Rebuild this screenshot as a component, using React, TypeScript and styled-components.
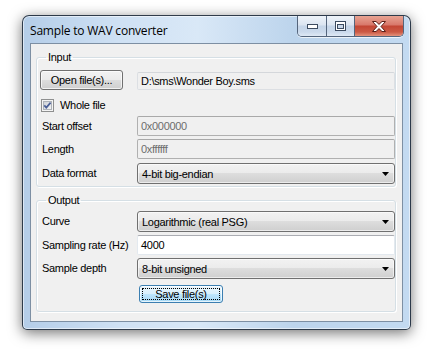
import React from "react";
import styled, { createGlobalStyle } from "styled-components";

const GlobalStyle = createGlobalStyle`
  html, body {
    margin: 0;
    padding: 0;
    background: #ffffff;
  }
  body {
    width: 433px;
    height: 353px;
    overflow: hidden;
    font-family: "Liberation Sans", Arial, sans-serif;
    font-size: 11px;
    letter-spacing: -0.3px;
    color: #000;
  }
`;

const Window = styled.div`
  box-sizing: border-box;
  width: 389px;
  height: 315px;
  margin: 15px 0 0 22px;
  padding: 0 7px 7px;
  display: flex;
  flex-direction: column;
  border: 1px solid rgba(20, 30, 45, 0.85);
  border-radius: 7px 7px 5px 5px;
  background: linear-gradient(
    to right,
    #b4cde8 0%,
    #cfe1f4 25%,
    #d9e8f7 45%,
    #bcd4ec 70%,
    #c3daf1 100%
  );
  box-shadow: inset 0 0 0 1px rgba(255, 255, 255, 0.55),
    0 3px 14px rgba(0, 0, 0, 0.55);
`;

const TitleBar = styled.div`
  height: 27px;
  display: flex;
  align-items: flex-start;
  justify-content: space-between;
`;

const Title = styled.div`
  padding-top: 6px;
  font-family: "Open Sans", "Noto Sans", sans-serif;
  font-size: 12px;
  letter-spacing: -0.2px;
  color: #000;
`;

const CaptionButtons = styled.div`
  display: flex;
  height: 20px;
  margin-right: -1px;
  border: 1px solid #54657c;
  border-top: none;
  border-radius: 0 0 5px 5px;
  overflow: hidden;
  box-shadow: 0 1px 0 rgba(255, 255, 255, 0.7);
`;

const CaptionButton = styled.div<{ $w: number; $close?: boolean }>`
  width: ${({ $w }) => $w}px;
  display: flex;
  align-items: center;
  justify-content: center;
  background: ${({ $close }) =>
    $close
      ? "linear-gradient(#e8a493 0%, #d8786a 45%, #c34634 50%, #cc5a45 80%, #e3937d 100%)"
      : "linear-gradient(#eef3f9 0%, #dbe5f1 45%, #c5d5e8 50%, #cbdaec 80%, #dfe9f5 100%)"};
  & + & {
    border-left: 1px solid #54657c;
  }
`;

const Client = styled.div`
  flex: 1;
  background: #f0f0f0;
  border: 1px solid #7d8fa3;
  display: flex;
  flex-direction: column;
`;

const Group = styled.fieldset<{ $top: number; $pt: number; $bottom: number }>`
  margin: ${({ $top }) => $top}px 6px 0 5px;
  padding: ${({ $pt }) => $pt}px 0 ${({ $bottom }) => $bottom}px 4px;
  border: 1px solid #d5dfe5;
  border-radius: 3px;
  box-shadow: inset 1px 1px 0 #ffffff, 1px 1px 0 #ffffff;
  min-width: 0;
`;

const Legend = styled.legend`
  margin-left: 5px;
  padding: 0 2px;
  line-height: 13px;
  font-size: 11px;
`;

const Row = styled.div<{ $h: number }>`
  height: ${({ $h }) => $h}px;
  display: grid;
  grid-template-columns: 96px 1fr;
  align-items: start;
`;

const Label = styled.div`
  padding: 4px 0 0 1px;
  line-height: 13px;
  white-space: nowrap;
`;

const PushButton = styled.div<{ $w: number; $h: number; $hot?: boolean }>`
  box-sizing: border-box;
  width: ${({ $w }) => $w}px;
  height: ${({ $h }) => $h}px;
  padding: 2px;
  display: flex;
  border: 1px solid ${({ $hot }) => ($hot ? "#3c7fb1" : "#707070")};
  border-radius: 3px;
  background: ${({ $hot }) =>
    $hot
      ? "linear-gradient(#eaf6fd 0%, #d9f0fc 49%, #bee6fd 50%, #a7d9f5 100%)"
      : "linear-gradient(#f2f2f2 0%, #ebebeb 49%, #dddddd 50%, #cfcfcf 100%)"};
  box-shadow: inset 0 0 0 1px rgba(255, 255, 255, 0.7);
`;

const FocusText = styled.span<{ $focus?: boolean }>`
  flex: 1;
  display: flex;
  align-items: center;
  justify-content: center;
  white-space: nowrap;
  border: 1px dotted ${({ $focus }) => ($focus ? "#000" : "transparent")};
`;

const TextBox = styled.div<{ $kind: "readonly" | "disabled" | "normal"; $mt?: number }>`
  box-sizing: border-box;
  height: ${({ $kind }) => ($kind === "readonly" ? 18 : 20)}px;
  margin-top: ${({ $mt }) => $mt ?? 0}px;
  padding-left: 3px;
  display: flex;
  align-items: center;
  white-space: nowrap;
  background: ${({ $kind }) => ($kind === "normal" ? "#ffffff" : "#f0f0f0")};
  color: ${({ $kind }) => ($kind === "disabled" ? "#6d6d6d" : "#000")};
  border: 1px solid
    ${({ $kind }) =>
      $kind === "disabled" ? "#b0b0b0" : $kind === "readonly" ? "#dcdfe3" : "#e3e9ef"};
  border-top-color: ${({ $kind }) =>
    $kind === "disabled" ? "#a9a9a9" : $kind === "readonly" ? "#d4d7db" : "#abadb3"};
  border-radius: 2px;
`;

const Combo = styled.div`
  box-sizing: border-box;
  height: 21px;
  padding: 0 5px 0 4px;
  display: flex;
  align-items: center;
  justify-content: space-between;
  white-space: nowrap;
  border: 1px solid #707070;
  border-radius: 3px;
  background: linear-gradient(#f2f2f2 0%, #ebebeb 49%, #dddddd 50%, #cfcfcf 100%);
  box-shadow: inset 0 0 0 1px rgba(255, 255, 255, 0.6);
`;

const CheckRow = styled.label`
  grid-column: 1 / 3;
  display: flex;
  align-items: center;
  gap: 6px;
  padding-top: 3px;
  line-height: 13px;
`;

const SaveCell = styled.div`
  grid-column: 2;
  padding-left: 2px;
`;

const OpenCell = styled.div`
  margin-left: -1px;
`;

const Arrow = () => (
  <svg width="7" height="4" viewBox="0 0 7 4">
    <path d="M0 0H7L3.5 4Z" fill="#000" />
  </svg>
);

const CheckBox = () => (
  <svg width="13" height="13" viewBox="0 0 13 13">
    <defs>
      <linearGradient id="cb" x1="0" y1="0" x2="1" y2="1">
        <stop offset="0" stopColor="#cbcfd5" />
        <stop offset="1" stopColor="#f6f6f6" />
      </linearGradient>
    </defs>
    <rect x="0.5" y="0.5" width="12" height="12" fill="#f4f4f4" stroke="#8e8f8f" />
    <rect x="2.5" y="2.5" width="8" height="8" fill="url(#cb)" stroke="#aeb3b9" strokeWidth="1" />
    <path d="M3.3 6.4L5.3 8.6L9.6 3.6" fill="none" stroke="#4a5f97" strokeWidth="1.7" />
  </svg>
);

const MinGlyph = () => (
  <svg width="11" height="5" viewBox="0 0 11 5">
    <rect x="0.5" y="0.5" width="10" height="4" fill="#ffffff" stroke="#3c4b60" />
  </svg>
);

const MaxGlyph = () => (
  <svg width="11" height="10" viewBox="0 0 11 10">
    <rect x="0.5" y="0.5" width="10" height="9" fill="#ffffff" stroke="#3c4b60" />
    <rect x="2.5" y="3.5" width="6" height="4" fill="#c9d7e8" stroke="#3c4b60" />
  </svg>
);

const CloseGlyph = () => (
  <svg width="14" height="11" viewBox="0 0 14 11">
    <path
      d="M0.5 0.5H4L7 3.4L10 0.5H13.5L9 5.5L13.5 10.5H10L7 7.6L4 10.5H0.5L5 5.5Z"
      fill="#ffffff"
      stroke="#5a1f18"
      strokeWidth="1"
      strokeLinejoin="round"
    />
  </svg>
);

export default function App() {
  return (
    <>
      <GlobalStyle />
      <Window>
        <TitleBar>
          <Title>Sample to WAV converter</Title>
          <CaptionButtons>
            <CaptionButton $w={28}>
              <MinGlyph />
            </CaptionButton>
            <CaptionButton $w={27}>
              <MaxGlyph />
            </CaptionButton>
            <CaptionButton $w={48} $close>
              <CloseGlyph />
            </CaptionButton>
          </CaptionButtons>
        </TitleBar>
        <Client>
          <Group $top={7} $pt={6} $bottom={2}>
            <Legend>Input</Legend>
            <Row $h={26}>
              <OpenCell>
                <PushButton $w={83} $h={20}>
                  <FocusText>Open file(s)...</FocusText>
                </PushButton>
              </OpenCell>
              <TextBox $kind="readonly" $mt={2}>
                D:\sms\Wonder Boy.sms
              </TextBox>
            </Row>
            <Row $h={20}>
              <CheckRow>
                <CheckBox />
                Whole file
              </CheckRow>
            </Row>
            <Row $h={23}>
              <Label>Start offset</Label>
              <TextBox $kind="disabled">0x000000</TextBox>
            </Row>
            <Row $h={24}>
              <Label>Length</Label>
              <TextBox $kind="disabled">0xffffff</TextBox>
            </Row>
            <Row $h={21}>
              <Label>Data format</Label>
              <Combo>
                4-bit big-endian
                <Arrow />
              </Combo>
            </Row>
          </Group>
          <Group $top={7} $pt={4} $bottom={8}>
            <Legend>Output</Legend>
            <Row $h={24}>
              <Label>Curve</Label>
              <Combo>
                Logarithmic (real PSG)
                <Arrow />
              </Combo>
            </Row>
            <Row $h={23}>
              <Label>Sampling rate (Hz)</Label>
              <TextBox $kind="normal">4000</TextBox>
            </Row>
            <Row $h={27}>
              <Label>Sample depth</Label>
              <Combo>
                8-bit unsigned
                <Arrow />
              </Combo>
            </Row>
            <Row $h={18}>
              <SaveCell>
                <PushButton $w={84} $h={18} $hot>
                  <FocusText $focus>Save file(s)</FocusText>
                </PushButton>
              </SaveCell>
            </Row>
          </Group>
        </Client>
      </Window>
    </>
  );
}
